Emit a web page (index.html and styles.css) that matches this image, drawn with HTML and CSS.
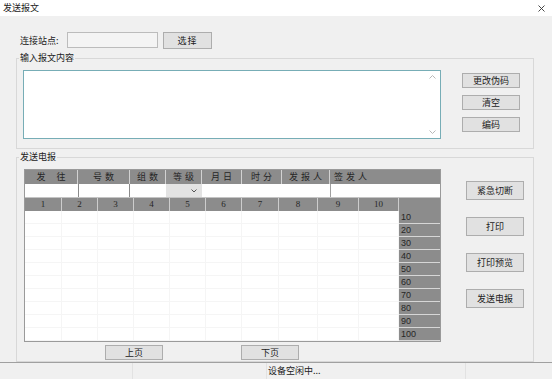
FILE: index.html
```html
<!DOCTYPE html>
<html lang="zh-CN">
  <head>
    <meta charset="UTF-8" />
    <meta name="viewport" content="width=device-width, initial-scale=1.0" />
    <title>发送报文</title>
    <link rel="stylesheet" href="styles.css">
  </head>
  <body>
    <div class="titlebar">
      <span>发送报文</span>
      <svg class="close" viewBox="0 0 7 7"><path d="M0.5 0.5L6.5 6.5M6.5 0.5L0.5 6.5" stroke="#333" stroke-width="0.9" fill="none"/></svg>
    </div>

    <div class="conn-row">
      <label class="conn-label">连接站点:</label>
      <div class="site-input"></div>
      <button class="btn btn-pick">选择</button>
    </div>

    <fieldset class="group group-input">
      <legend>输入报文内容</legend>
      <div class="group-inner">
        <div class="memo">
          <div class="memo-scroll">
            <svg viewBox="0 0 7 4"><path d="M0.5 3.5L3.5 0.5L6.5 3.5" stroke="#b8b8b8" fill="none"/></svg>
            <svg viewBox="0 0 7 4"><path d="M0.5 0.5L3.5 3.5L6.5 0.5" stroke="#b8b8b8" fill="none"/></svg>
          </div>
        </div>
        <div class="side-btns side-small">
          <button class="btn">更改伪码</button>
          <button class="btn">清空</button>
          <button class="btn">编码</button>
        </div>
      </div>
    </fieldset>

    <fieldset class="group group-send">
      <legend>发送电报</legend>
      <div class="group-inner">
        <div class="send-left">
          <div class="sheet">
            <div class="sheet-head">
              <div class="hc sp-wide">发往</div>
              <div class="hc sp-mid">号数</div>
              <div class="hc sp-mid">组数</div>
              <div class="hc sp-mid">等级</div>
              <div class="hc sp-mid">月日</div>
              <div class="hc sp-mid">时分</div>
              <div class="hc sp-mid">发报人</div>
              <div class="hc hc-left sp-mid">签发人</div>
            </div>
            <div class="sheet-input">
              <div class="ic"></div>
              <div class="ic ic-box"></div>
              <div class="ic"></div>
              <div class="ic ic-select">
                <svg viewBox="0 0 6 4"><path d="M0.5 0.5L3 3L5.5 0.5" stroke="#555" fill="none"/></svg>
              </div>
              <div class="ic"></div>
              <div class="ic"></div>
              <div class="ic"></div>
              <div class="ic ic-sign"></div>
            </div>
            <div class="sheet-nums" id="num-row"></div>
            <div id="data-rows"></div>
          </div>
          <div class="pager">
            <button class="btn">上页</button>
            <button class="btn">下页</button>
          </div>
        </div>
        <div class="side-btns side-tall">
          <button class="btn">紧急切断</button>
          <button class="btn">打印</button>
          <button class="btn">打印预览</button>
          <button class="btn">发送电报</button>
        </div>
      </div>
    </fieldset>

    <div class="statusbar">
      <div class="seg seg-a"></div>
      <div class="seg seg-b"></div>
      <div class="seg seg-c">设备空闲中...</div>
      <div class="seg seg-d"></div>
    </div>

    <script>
      const numRow = document.getElementById("num-row");
      const dataRows = document.getElementById("data-rows");

      // column numbers 1..10, then the blank label column
      for (let i = 1; i <= 10; i++) {
        const cell = document.createElement("div");
        cell.className = "nc";
        cell.textContent = i;
        numRow.appendChild(cell);
      }
      const blank = document.createElement("div");
      blank.className = "nc";
      numRow.appendChild(blank);

      // ten data rows labelled 10..100
      for (let r = 1; r <= 10; r++) {
        const row = document.createElement("div");
        row.className = "data-row";
        for (let c = 0; c < 10; c++) {
          const cell = document.createElement("div");
          cell.className = "dc";
          row.appendChild(cell);
        }
        const label = document.createElement("div");
        label.className = "dc row-label";
        label.textContent = r * 10;
        row.appendChild(label);
        dataRows.appendChild(row);
      }
    </script>
  </body>
</html>
```

FILE: styles.css
```css
* {
  box-sizing: border-box;
}
body {
  margin: 0;
  width: 552px;
  height: 379px;
  overflow: hidden;
  background-color: #f0f0f0;
  font-family: "Noto Sans CJK SC", sans-serif;
  font-size: 9px;
  color: #222;
}
.titlebar {
  height: 16px;
  background-color: #fff;
  display: flex;
  align-items: center;
  justify-content: space-between;
  padding: 0 7px 0 3px;
  line-height: 16px;
}
.close {
  width: 7px;
  height: 7px;
}
.btn {
  font-family: inherit;
  font-size: 9px;
  color: #222;
  background-color: #e1e1e1;
  border: 1px solid #adadad;
  padding: 0;
  margin: 0;
  line-height: 1;
}

/* connection row */
.conn-row {
  display: flex;
  align-items: center;
  height: 16px;
  margin-top: 16px;
  padding-left: 20px;
}
.conn-label {
  width: 47px;
}
.site-input {
  width: 91px;
  height: 16px;
  border: 1px solid #bcbcbc;
  background-color: #f4f4f4;
}
.btn-pick {
  width: 49px;
  height: 17px;
  margin-left: 5px;
  letter-spacing: 1px;
}

/* group boxes */
.group {
  margin: 3px 18px 0 16px;
  border: 1px solid #d8d8d8;
  padding: 5px 0 9px 6px;
  min-width: 0;
}
.group legend {
  padding: 0 1px;
  margin-left: -4px;
  line-height: 14px;
}
.group-inner {
  display: flex;
  align-items: flex-start;
}
.group-send {
  margin-top: 1px;
  padding-bottom: 1px;
}

/* message memo */
.memo {
  width: 418px;
  height: 69px;
  border: 1px solid #77adb6;
  background-color: #fff;
  display: flex;
  justify-content: flex-end;
}
.memo-scroll {
  width: 16px;
  display: flex;
  flex-direction: column;
  justify-content: space-between;
  align-items: center;
  padding: 4px 0 4px;
}
.memo-scroll svg {
  width: 7px;
  height: 4px;
}

.side-btns {
  display: flex;
  flex-direction: column;
}
.side-btns .btn {
  width: 58px;
}
.side-small {
  margin-left: 21px;
  margin-top: 3px;
  gap: 7px;
}
.side-small .btn {
  height: 15px;
}
.side-tall {
  margin-left: 25px;
  margin-top: 12px;
  gap: 17px;
}
.side-tall .btn {
  height: 19px;
}

/* telegram sheet */
.send-left {
  display: flex;
  flex-direction: column;
}
.sheet {
  width: 417px;
  margin-left: 1px;
  border: 1px solid #9a9a9a;
  background-color: #fff;
}
.sheet-head,
.sheet-input {
  display: grid;
  grid-template-columns: 53px 52px 36px 36px 40px 40px 48px 1fr;
  height: 14px;
}
.sheet-head {
  background-color: #8c8c8c;
}
.hc {
  border-right: 1px solid #d2d2d2;
  line-height: 14px;
  text-align: center;
  color: #262626;
}
.hc:last-child {
  border-right: none;
}
.sp-wide {
  letter-spacing: 11px;
  text-indent: 11px;
}
.sp-mid {
  letter-spacing: 3px;
  text-indent: 3px;
}
.hc-left {
  text-align: left;
  text-indent: 4px;
}
.sheet-input {
  border-bottom: 1px solid #c4c4c4;
}
.ic-box {
  border: 1px solid #8a8a8a;
  border-top: none;
  border-bottom: none;
}
.ic-select {
  background-color: #e3e3e3;
  display: flex;
  align-items: center;
  justify-content: flex-end;
  padding-right: 5px;
}
.ic-select svg {
  width: 6px;
  height: 4px;
}
.ic-sign {
  border-left: 1px solid #a0a0a0;
}
.sheet-nums,
.data-row {
  display: grid;
  grid-template-columns: 37px 36px 36px 36px 36px 36px 37px 39px 41px 40px 1fr;
  height: 13px;
}
.sheet-nums {
  background-color: #8c8c8c;
}
.nc {
  border-right: 1px solid #cdcdcd;
  text-align: center;
  line-height: 13px;
  font-family: "Liberation Serif", serif;
  font-size: 9px;
  color: #262626;
}
.nc:last-child {
  border-right: none;
}
.dc {
  border-right: 1px solid #f5f5f5;
  border-bottom: 1px solid #f5f5f5;
}
.row-label {
  border-right: none;
  border-bottom: 1px solid #d6d6d6;
  background-color: #8c8c8c;
  padding-left: 2px;
  line-height: 12px;
  font-family: "Liberation Sans", sans-serif;
  font-size: 9px;
  color: #262626;
}

.pager {
  display: flex;
  gap: 78px;
  padding-left: 82px;
  margin-top: 3px;
}
.pager .btn {
  width: 58px;
  height: 15px;
}

/* status bar */
.statusbar {
  display: flex;
  height: 17px;
  border-top: 1px solid #a0a0a0;
  line-height: 15px;
}
.seg {
  border-right: 1px solid #e2e2e2;
}
.seg-a {
  width: 133px;
}
.seg-b {
  width: 134px;
}
.seg-c {
  width: 199px;
  padding-left: 1px;
}
.seg-d {
  flex: 1;
  border-right: none;
}
```
